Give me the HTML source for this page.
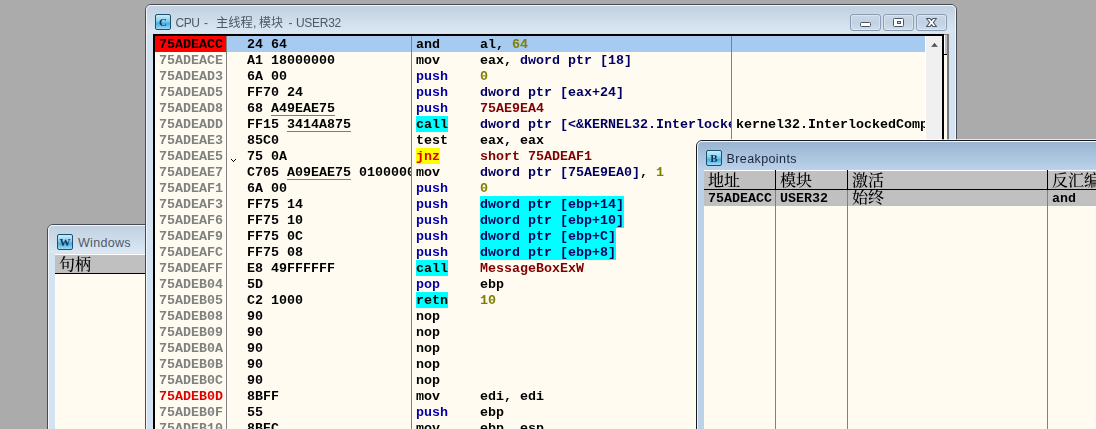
<!DOCTYPE html>
<html lang="zh-CN"><head><meta charset="utf-8"><title>OllyDbg</title>
<style>
html,body{margin:0;padding:0}
body{width:1096px;height:429px;overflow:hidden;background:#ababab;position:relative;font-family:"Liberation Sans","Noto Sans CJK SC",sans-serif}
.win{position:absolute;box-sizing:border-box;border:1px solid #484c52;border-radius:6px 6px 0 0;overflow:hidden}
.win .in{position:absolute;left:0;top:0;right:0;bottom:0;border:1px solid #f2f6fc;border-radius:5px 5px 0 0;box-sizing:border-box}
.win.inact{background:#d4e3f2}
.win.inact .tb{background:linear-gradient(#c0d0e0,#dbe7f3)}
.win.act{border-color:#16181c;background:#bbd2ea;box-shadow:0 0 0 1px rgba(255,255,255,.7)}
.win.act .tb{background:linear-gradient(#98b3d0,#b9d1ea)}
.tb{position:absolute;left:0;top:0;right:0;height:28px}
.ico{position:absolute;left:9px;top:9px;width:16px;height:16px;box-sizing:border-box;border:1px solid #1c506f;border-radius:2px;background:linear-gradient(#c8ecfa 0%,#8ed2f0 40%,#46b0e2 62%,#9edcf4 100%);font:bold 11px/14px "Liberation Serif",serif;color:#0f3558;text-align:center}
.ttl{position:absolute;left:0;top:0;height:28px;line-height:36px;font-size:12px;white-space:nowrap;color:#4c5866}
.ttl span{position:absolute;top:0}
.act .ttl{color:#1c2440}
.btn{position:absolute;top:9px;width:31px;height:17px;box-sizing:border-box;border:1px solid #8b9db4;border-radius:3px;background:linear-gradient(#cad8e7,#c2d2e3 50%,#cfdcea);box-shadow:inset 0 0 0 1px rgba(255,255,255,.35)}
.mono{font:bold 13.3333px/16px "Liberation Mono","Noto Sans CJK SC",monospace;white-space:pre}
.pane{position:absolute;background:#fffbf0;overflow:hidden}
.pane{will-change:transform}
.r{position:absolute;left:0;height:16px;width:770px}
.r span{position:absolute;top:0;height:16px;overflow:hidden;line-height:18px}
.r .a{left:0;width:71px;padding-left:4px;box-sizing:border-box;color:#808080}
.r .h{left:72px;width:184px;padding-left:20px;box-sizing:border-box}
.r .d{left:257px;width:319px;padding-left:4px;box-sizing:border-box}
.r .c{left:577px;width:193px;padding-left:4px;box-sizing:border-box}
.r span span{position:static;display:inline-block;vertical-align:top}
.sel{background:#a6caf0}
.bp{background:#ff0000;color:#000 !important}
.red{color:#e00000 !important}
u{text-decoration:none;display:inline-block;height:15px;border-bottom:1px solid #7c7c7c;vertical-align:top}
.b{color:#0000a8}.n{color:#000064}.o{color:#808000}.m{color:#800000}
.cy{background:#00ffff}.jy{background:#ffff00;color:#e00000}
.c2{background:#00ffff}
.jm{position:absolute;left:4px;top:11px;width:5px;height:3px}
.sep{position:absolute;top:0;bottom:0;width:1px;background:#808080}
.hdr{position:absolute;left:0;right:0;top:0;height:20px;background:#c0c0c0;border-top:1px solid #fff;border-bottom:1px solid #000;box-sizing:border-box}
.hdr b{position:absolute;top:1px;font:500 16px/18px "Liberation Sans","Noto Serif CJK SC",serif;white-space:nowrap}
.hdr s{position:absolute;top:-1px;height:20px;width:1px;background:#000}
</style></head><body>

<!-- Windows (back) -->
<div class="win inact" style="left:47px;top:224px;width:300px;height:300px">
 <div class="tb"></div><div class="in"></div>
 <div class="ico">W</div><div class="ttl"><span style="left:30px;letter-spacing:.3px;font-size:12.500px;color:#4e5a6c">Windows</span></div>
 <div class="pane" style="left:7px;top:29px;width:300px;height:300px">
  <div class="hdr"><b style="left:4px">句柄</b></div>
 </div>
</div>

<!-- CPU -->
<div class="win inact" style="left:145px;top:4px;width:812px;height:500px">
 <div class="tb"></div><div class="in"></div>
 <div class="ico">C</div><div class="ttl"><span style="left:29.500px;letter-spacing:-.4px">CPU</span><span style="left:58px">-</span><span style="left:70px;font-size:12.300px">主线程,</span><span style="left:113px">模块</span><span style="left:142.500px">-</span><span style="left:150px;letter-spacing:-.3px">USER32</span></div>
 <div class="btn" style="left:704px"><svg width="29" height="15" viewBox="0 0 29 15" style="display:block"><rect x="9.5" y="7.5" width="10" height="4" rx="1" fill="#fff" stroke="#4b5566"/></svg></div>
 <div class="btn" style="left:737px"><svg width="29" height="15" viewBox="0 0 29 15" style="display:block"><rect x="9.5" y="3.5" width="10" height="8" rx="1" fill="#fff" stroke="#4b5566"/><rect x="13.5" y="6.5" width="3" height="2" fill="#c8d4e2" stroke="#4b5566"/></svg></div>
 <div class="btn" style="left:770px"><svg width="29" height="15" viewBox="0 0 29 15" style="display:block"><path d="M9.5 3.5h3.600l1.400 1.900 1.400-1.900h3.600l-3.200 4 3.200 4h-3.600l-1.400-1.900-1.400 1.900h-3.600l3.200-4z" fill="#fff" stroke="#4b5566" stroke-width="1.100" stroke-linejoin="round"/></svg></div>
 <!-- black bordered disasm pane -->
 <div style="position:absolute;left:7px;top:29px;width:791px;height:480px;background:#000"></div>
 <div class="pane mono" style="left:9px;top:31px;width:787px;height:480px">
<div class="r sel" style="top:0px"><span class="a bp">75ADEACC</span><span class="h">24 64</span><span class="d">and     al, <span class="o">64</span></span><span class="c"></span></div>
<div class="r" style="top:16px"><span class="a">75ADEACE</span><span class="h">A1 18000000</span><span class="d">mov     eax, <span class="n">dword ptr [18]</span></span><span class="c"></span></div>
<div class="r" style="top:32px"><span class="a">75ADEAD3</span><span class="h">6A 00</span><span class="d"><span class="b">push</span>    <span class="o">0</span></span><span class="c"></span></div>
<div class="r" style="top:48px"><span class="a">75ADEAD5</span><span class="h">FF70 24</span><span class="d"><span class="b">push</span>    <span class="n">dword ptr [eax+24]</span></span><span class="c"></span></div>
<div class="r" style="top:64px"><span class="a">75ADEAD8</span><span class="h">68 <u>A49EAE75</u></span><span class="d"><span class="b">push</span>    <span class="m">75AE9EA4</span></span><span class="c"></span></div>
<div class="r" style="top:80px"><span class="a">75ADEADD</span><span class="h">FF15 <u>3414A875</u></span><span class="d"><span class="cy">call</span>    <span class="n">dword ptr [&lt;&amp;KERNEL32.InterlockedCompareExchange&gt;]</span></span><span class="c">kernel32.InterlockedCompareExchange</span></div>
<div class="r" style="top:96px"><span class="a">75ADEAE3</span><span class="h">85C0</span><span class="d">test    eax, eax</span><span class="c"></span></div>
<div class="r" style="top:112px"><span class="a">75ADEAE5</span><span class="h"><svg class="jm" width="5" height="3" viewBox="0 0 5 3"><path d="M0 0h1v1h1v1h1v1h-1v-1h-1v-1h-1zM4 0h1v1h-1v1h-1v-1h1z" fill="#000"/></svg>75 0A</span><span class="d"><span class="jy">jnz</span>     <span class="m">short 75ADEAF1</span></span><span class="c"></span></div>
<div class="r" style="top:128px"><span class="a">75ADEAE7</span><span class="h">C705 <u>A09EAE75</u> 01000000</span><span class="d">mov     <span class="n">dword ptr [75AE9EA0]</span>, <span class="o">1</span></span><span class="c"></span></div>
<div class="r" style="top:144px"><span class="a">75ADEAF1</span><span class="h">6A 00</span><span class="d"><span class="b">push</span>    <span class="o">0</span></span><span class="c"></span></div>
<div class="r" style="top:160px"><span class="a">75ADEAF3</span><span class="h">FF75 14</span><span class="d"><span class="b">push</span>    <span class="n c2">dword ptr [ebp+14]</span></span><span class="c"></span></div>
<div class="r" style="top:176px"><span class="a">75ADEAF6</span><span class="h">FF75 10</span><span class="d"><span class="b">push</span>    <span class="n c2">dword ptr [ebp+10]</span></span><span class="c"></span></div>
<div class="r" style="top:192px"><span class="a">75ADEAF9</span><span class="h">FF75 0C</span><span class="d"><span class="b">push</span>    <span class="n c2">dword ptr [ebp+C]</span></span><span class="c"></span></div>
<div class="r" style="top:208px"><span class="a">75ADEAFC</span><span class="h">FF75 08</span><span class="d"><span class="b">push</span>    <span class="n c2">dword ptr [ebp+8]</span></span><span class="c"></span></div>
<div class="r" style="top:224px"><span class="a">75ADEAFF</span><span class="h">E8 49FFFFFF</span><span class="d"><span class="cy">call</span>    <span class="m">MessageBoxExW</span></span><span class="c"></span></div>
<div class="r" style="top:240px"><span class="a">75ADEB04</span><span class="h">5D</span><span class="d"><span class="b">pop</span>     ebp</span><span class="c"></span></div>
<div class="r" style="top:256px"><span class="a">75ADEB05</span><span class="h">C2 1000</span><span class="d"><span class="cy">retn</span>    <span class="o">10</span></span><span class="c"></span></div>
<div class="r" style="top:272px"><span class="a">75ADEB08</span><span class="h">90</span><span class="d">nop     </span><span class="c"></span></div>
<div class="r" style="top:288px"><span class="a">75ADEB09</span><span class="h">90</span><span class="d">nop     </span><span class="c"></span></div>
<div class="r" style="top:304px"><span class="a">75ADEB0A</span><span class="h">90</span><span class="d">nop     </span><span class="c"></span></div>
<div class="r" style="top:320px"><span class="a">75ADEB0B</span><span class="h">90</span><span class="d">nop     </span><span class="c"></span></div>
<div class="r" style="top:336px"><span class="a">75ADEB0C</span><span class="h">90</span><span class="d">nop     </span><span class="c"></span></div>
<div class="r" style="top:352px"><span class="a red">75ADEB0D</span><span class="h">8BFF</span><span class="d">mov     edi, edi</span><span class="c"></span></div>
<div class="r" style="top:368px"><span class="a">75ADEB0F</span><span class="h">55</span><span class="d"><span class="b">push</span>    ebp</span><span class="c"></span></div>
<div class="r" style="top:384px"><span class="a">75ADEB10</span><span class="h">8BEC</span><span class="d">mov     ebp, esp</span><span class="c"></span></div>
  <div class="sep" style="left:71px"></div>
  <div class="sep" style="left:256px"></div>
  <div class="sep" style="left:576px"></div>
  <div style="position:absolute;left:770px;top:0;width:17px;bottom:0;background:#f0f0f0;border-left:1px solid #fff;box-sizing:border-box">
   <svg width="16" height="17" viewBox="0 0 16 17" style="position:absolute;left:0;top:0"><defs><linearGradient id="ag" x1="0" y1="0" x2="0" y2="1"><stop offset="0" stop-color="#222"/><stop offset="1" stop-color="#777"/></linearGradient></defs><path d="M5 11l3.500-4L12 11z" fill="url(#ag)"/></svg>
  </div>
 </div>
 <!-- right sliver -->
 <div style="position:absolute;left:798px;top:29px;width:5px;height:480px;background:#fffbf0">
  <div style="position:absolute;left:0;top:0;width:5px;height:1px;background:#808080"></div>
  <div style="position:absolute;left:0;top:1px;width:3px;height:19px;background:#c0c0c0;border-left:1px solid #fff;box-sizing:border-box"></div>
  <div style="position:absolute;left:0;top:20px;width:3px;height:1px;background:#000"></div>
  <div style="position:absolute;left:3px;top:0;width:2px;height:480px;background:#787878"></div>
 </div>
</div>

<!-- Breakpoints -->
<div class="win act" style="left:696px;top:140px;width:500px;height:400px">
 <div class="tb"></div><div class="in"></div>
 <div class="ico">B</div><div class="ttl"><span style="left:29.500px;letter-spacing:.4px;font-size:12.500px">Breakpoints</span></div>
 <div class="pane mono" style="left:7px;top:29px;width:500px;height:400px">
  <div class="hdr"><b style="left:4px">地址</b><b style="left:76px">模块</b><b style="left:148px">激活</b><b style="left:348px">反汇编</b>
   <s style="left:71px"></s><s style="left:143px"></s><s style="left:343px"></s></div>
  <div style="position:absolute;left:0;top:20px;width:500px;height:16px;background:#c0c0c0;line-height:18px;overflow:hidden">
   <span style="position:absolute;top:0;left:4px">75ADEACC</span><span style="position:absolute;top:0;left:76px">USER32</span>
   <span style="position:absolute;top:0;left:148px;font:500 16px/16px 'Liberation Sans','Noto Serif CJK SC',serif">始终</span>
   <span style="position:absolute;top:0;left:348px">and     al, 64</span>
  </div>
  <div class="sep" style="left:71px;top:20px"></div>
  <div class="sep" style="left:143px;top:20px"></div>
  <div class="sep" style="left:343px;top:20px"></div>
 </div>
</div>
</body></html>
